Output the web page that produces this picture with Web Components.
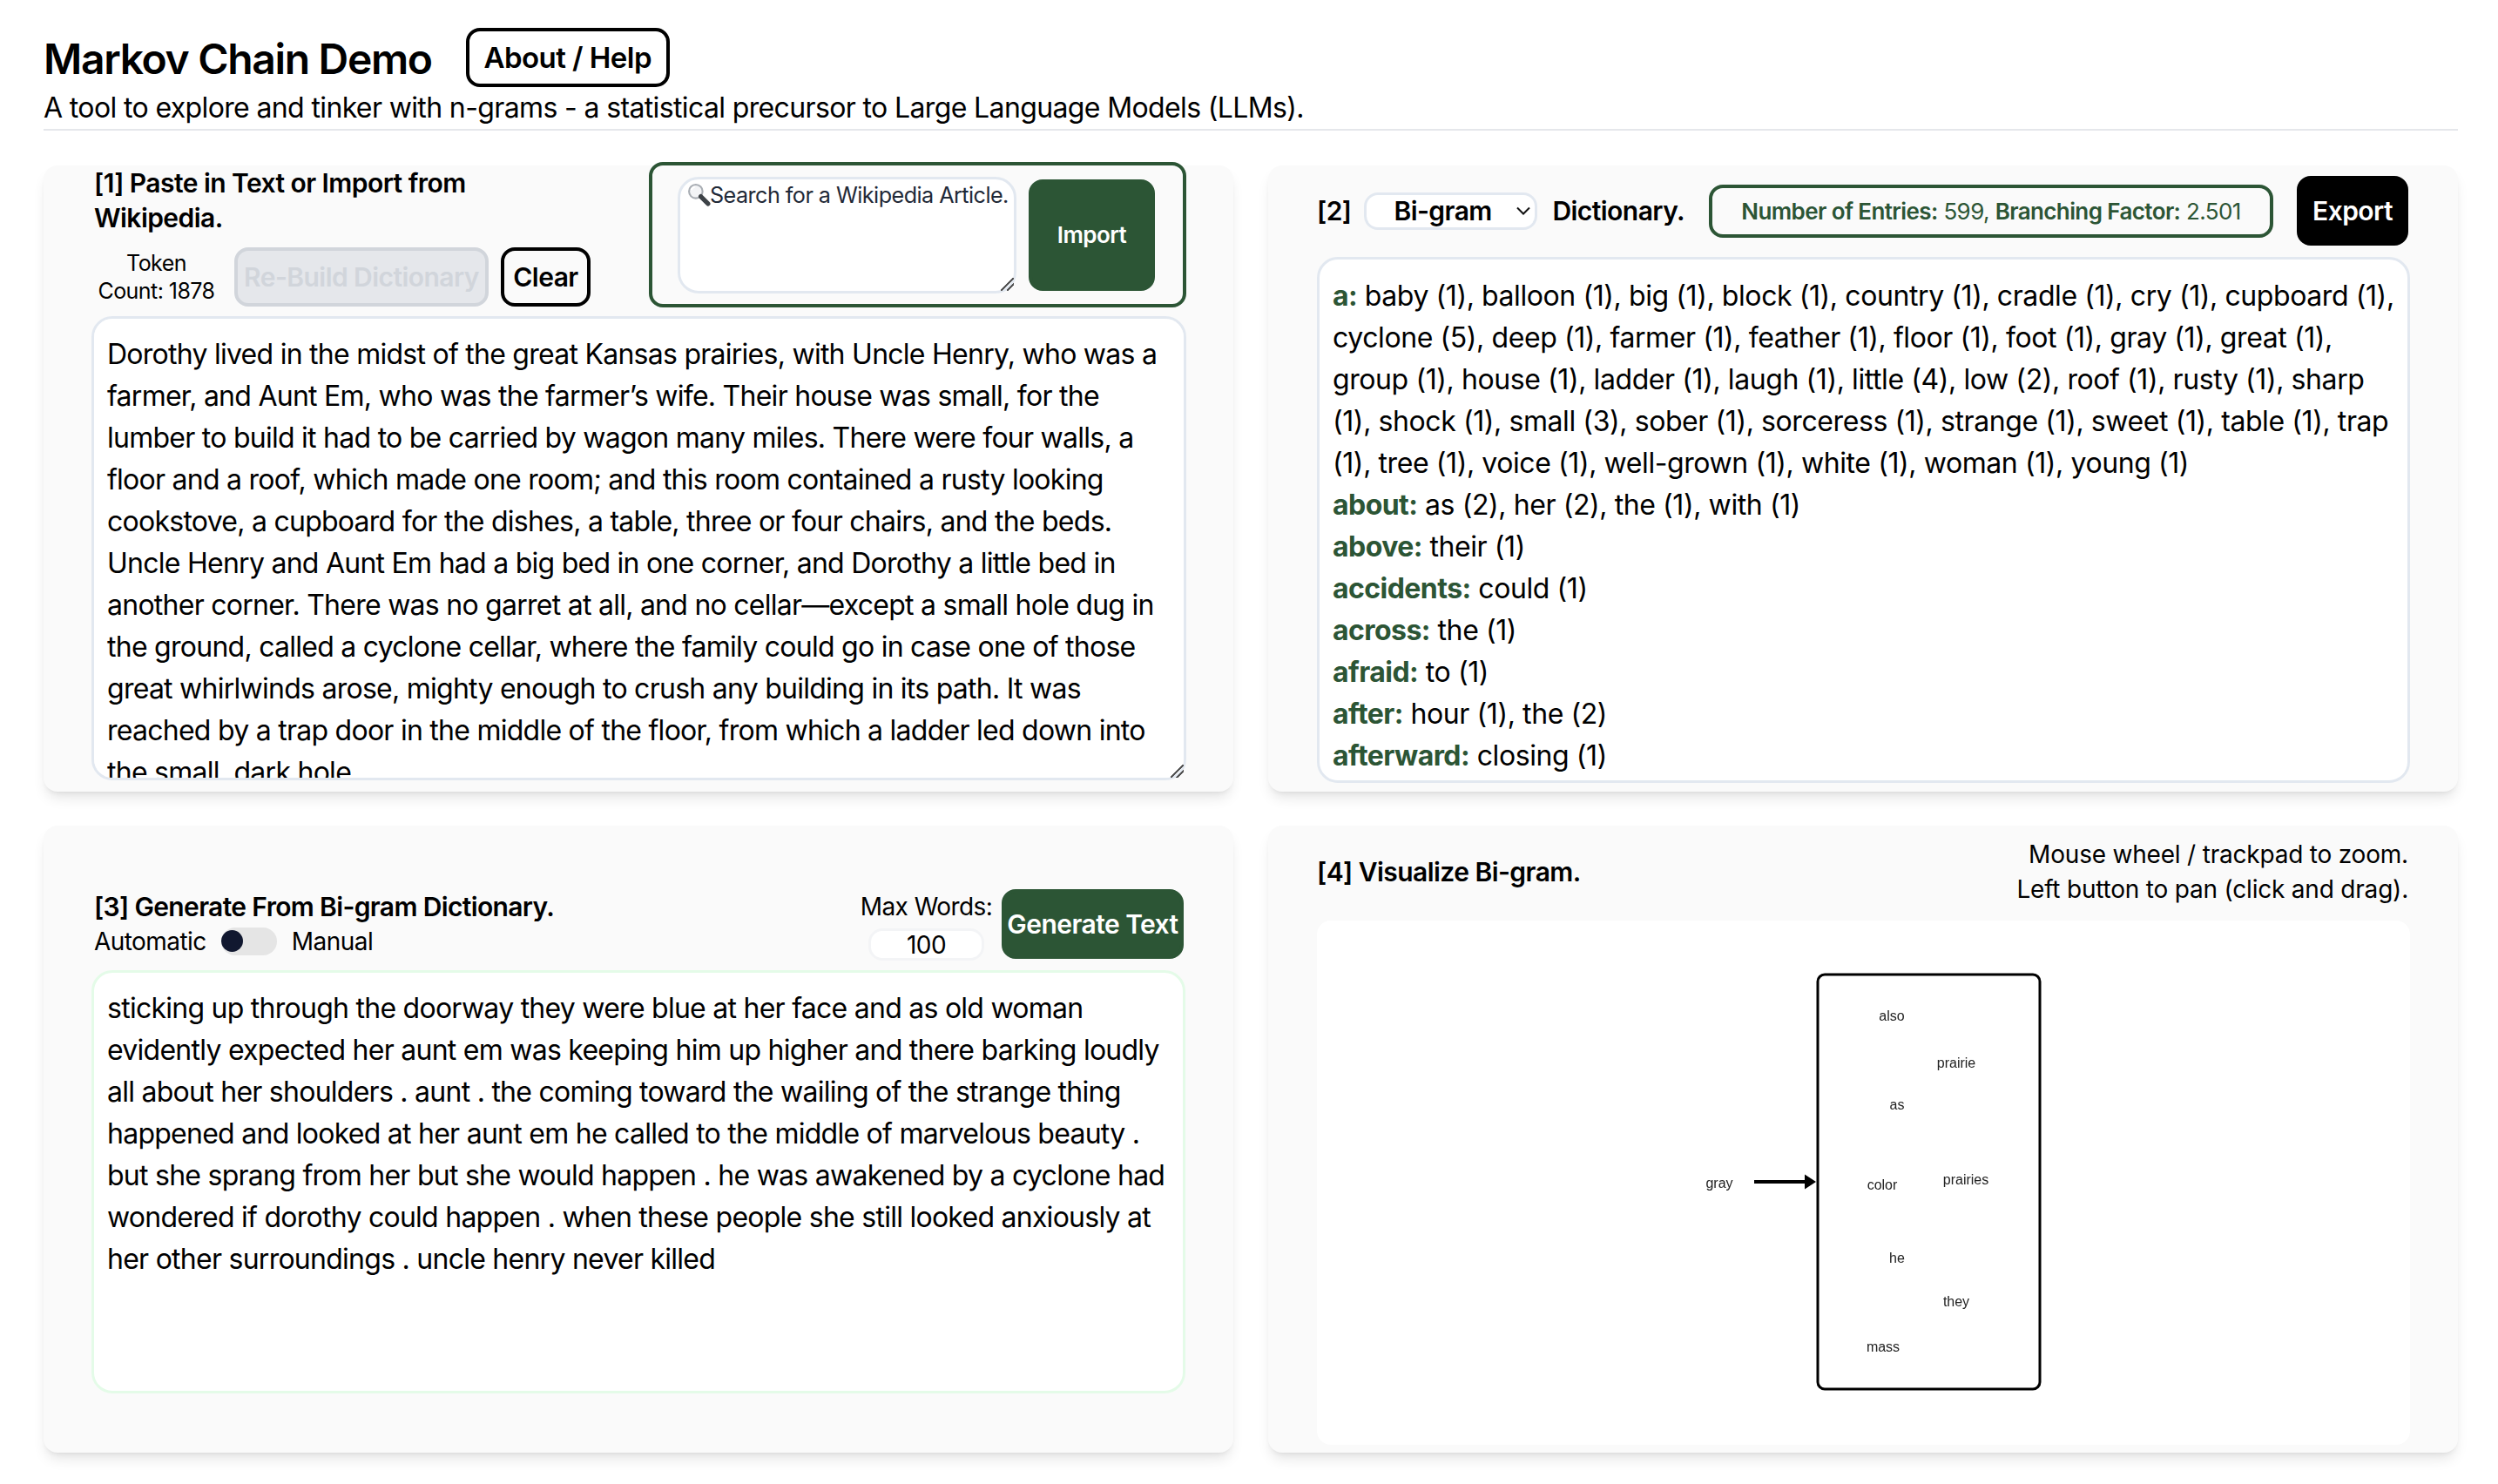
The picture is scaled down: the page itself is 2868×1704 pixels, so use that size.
<!DOCTYPE html>
<html lang="en">
<head>
<meta charset="utf-8">
<title>Markov Chain Demo</title>
<style>
  html, body { margin: 0; padding: 0; background: #fff; }
  body {
    font-family: Inter, "Liberation Sans", sans-serif;
    letter-spacing: -0.55px;
    color: #000;
    --green: #2c5535;
    --line: #e2e8f0;
  }
</style>
</head>
<body>
<markov-app></markov-app>

<script>
const DOROTHY = `Dorothy lived in the midst of the great Kansas prairies, with Uncle Henry, who was a farmer, and Aunt Em, who was the farmer’s wife. Their house was small, for the lumber to build it had to be carried by wagon many miles. There were four walls, a floor and a roof, which made one room; and this room contained a rusty looking cookstove, a cupboard for the dishes, a table, three or four chairs, and the beds. Uncle Henry and Aunt Em had a big bed in one corner, and Dorothy a little bed in another corner. There was no garret at all, and no cellar—except a small hole dug in the ground, called a cyclone cellar, where the family could go in case one of those great whirlwinds arose, mighty enough to crush any building in its path. It was reached by a trap door in the middle of the floor, from which a ladder led down into the small, dark hole.`

const GENERATED = `sticking up through the doorway they were blue at her face and as old woman evidently expected her aunt em was keeping him up higher and there barking loudly all about her shoulders . aunt . the coming toward the wailing of the strange thing happened and looked at her aunt em he called to the middle of marvelous beauty . but she sprang from her but she would happen . he was awakened by a cyclone had wondered if dorothy could happen . when these people she still looked anxiously at her other surroundings . uncle henry never killed`

const DICTIONARY = [
  ["a", "baby (1), balloon (1), big (1), block (1), country (1), cradle (1), cry (1), cupboard (1), cyclone (5), deep (1), farmer (1), feather (1), floor (1), foot (1), gray (1), great (1), group (1), house (1), ladder (1), laugh (1), little (4), low (2), roof (1), rusty (1), sharp (1), shock (1), small (3), sober (1), sorceress (1), strange (1), sweet (1), table (1), trap (1), tree (1), voice (1), well-grown (1), white (1), woman (1), young (1)"],
  ["about", "as (2), her (2), the (1), with (1)"],
  ["above", "their (1)"],
  ["accidents", "could (1)"],
  ["across", "the (1)"],
  ["afraid", "to (1)"],
  ["after", "hour (1), the (2)"],
  ["afterward", "closing (1)"],
]

// the two diagonal strokes of a resize corner, used by every resizable box
const RESIZER = `
  background: linear-gradient(135deg, transparent 46%, #555 46% 54%, transparent 54% 70%, #555 70% 77%, transparent 77%);
`

class MkButton extends HTMLElement {
  constructor() {
    super()
    this.attachShadow({ mode: "open" })
    this.shadowRoot.innerHTML = `
      <style>
        :host { display: inline-flex; box-sizing: border-box; }
        button {
          flex: 1;
          box-sizing: border-box;
          font: 600 30px/40px Inter, "Liberation Sans", sans-serif;
          letter-spacing: inherit;
          border-radius: 16px;
          padding: 0;
          cursor: pointer;
          border: 4px solid #000;
          background: transparent;
          color: #000;
          white-space: nowrap;
        }
        :host([kind="dark"]) button { background: #000; color: #fff; }
        :host([kind="green"]) button { background: var(--green); border-color: var(--green); color: #fff; }
        :host([kind="muted"]) button {
          background: #e5e7eb; border-color: #d1d5db; color: #d1d5db; cursor: default;
        }
        :host([size="big"]) button { font-size: 33px; }
        :host([size="small"]) button { font-size: 26px; }
      </style>
      <button><slot></slot></button>
    `
  }
}

class MkCard extends HTMLElement {
  constructor() {
    super()
    this.attachShadow({ mode: "open" })
    this.shadowRoot.innerHTML = `
      <style>
        :host {
          display: flex;
          flex-direction: column;
          box-sizing: border-box;
          min-width: 0;
          background: #fafafa;
          border-radius: 16px;
          box-shadow: 0 10px 15px -3px rgba(0,0,0,.1), 0 4px 6px -4px rgba(0,0,0,.1);
        }
      </style>
      <slot></slot>
    `
  }
}

class MkHeader extends HTMLElement {
  constructor() {
    super()
    this.attachShadow({ mode: "open" })
    this.shadowRoot.innerHTML = `
      <style>
        :host { display: block; border-bottom: 2px solid #e5e7eb; padding-bottom: 6px; }
        .top { display: flex; align-items: center; gap: 39px; }
        h1 { margin: 0; padding-top: 3px; font-size: 48px; line-height: 65px; font-weight: 600; letter-spacing: -1.33px; }
        mk-button { width: 234px; height: 68px; }
        p { margin: 6px 0 0; font-size: 32px; line-height: 36px; letter-spacing: -0.63px; }
      </style>
      <div class="top">
        <h1>Markov Chain Demo</h1>
        <mk-button size="big">About / Help</mk-button>
      </div>
      <p>A tool to explore and tinker with n-grams - a statistical precursor to Large Language Models (LLMs).</p>
    `
  }
}

class PastePanel extends HTMLElement {
  constructor() {
    super()
    this.attachShadow({ mode: "open" })
    this.shadowRoot.innerHTML = `
      <style>
        :host { display: flex; flex-direction: column; flex: 1; min-height: 0; padding: 0 54px 13px 55px; }
        .head { display: flex; justify-content: space-between; align-items: flex-start; margin: -4px 0 10px; height: 167px; }
        .left { width: 580px; padding: 4px 0 0 3px; box-sizing: border-box; }
        h2 { margin: 0; font-size: 30px; line-height: 40px; font-weight: 600; }
        .tools { display: flex; gap: 14px; margin-top: 14px; margin-left: -3px; }
        .count {
          width: 149px; margin-right: 1px; padding-top: 2px; text-align: center;
          font-size: 25px; line-height: 32px;
        }
        .rebuild { width: 292px; height: 68px; }
        .clear { width: 103px; height: 68px; }
        .wiki {
          width: 617px; height: 167px; box-sizing: border-box;
          display: flex; align-items: center; gap: 14px;
          padding: 0 32px 0 29px;
          border: 4px solid var(--green); border-radius: 16px;
        }
        .search {
          width: 389px; height: 134px; box-sizing: border-box; flex: none;
          background: #fff; border: 3px solid var(--line); border-radius: 24px;
          padding: 0 8px; font-size: 25.2px; line-height: 36px; color: #1f2937;
          overflow: hidden; resize: both; white-space: nowrap;
          display: flex; align-items: flex-start;
        }
        .search svg { flex: none; width: 27px; height: 27px; margin-top: 4px; margin-right: -1px; }
        .search::-webkit-resizer { ${RESIZER} }
        .import { flex: none; width: 145px; height: 128px; }
        textarea {
          flex: 1; min-height: 0; display: block; width: 100%; box-sizing: border-box;
          background: #fff; border: 3px solid var(--line); border-radius: 24px;
          padding: 17px 15px; margin: 0; color: #000; letter-spacing: -0.74px;
          font: 400 32px/48px Inter, "Liberation Sans", sans-serif;
          scrollbar-width: none; outline: none;
        }
        textarea::-webkit-resizer { ${RESIZER} }
      </style>
      <div class="head">
        <div class="left">
          <h2>[1] Paste in Text or Import from Wikipedia.</h2>
          <div class="tools">
            <div class="count">Token Count: 1878</div>
            <mk-button class="rebuild" kind="muted">Re-Build Dictionary</mk-button>
            <mk-button class="clear">Clear</mk-button>
          </div>
        </div>
        <div class="wiki">
          <div class="search">
            <svg viewBox="0 0 26 26" aria-hidden="true">
              <circle cx="9.5" cy="9.5" r="7.5" fill="#f3f4f6" stroke="#a8adb3" stroke-width="2"/>
              <path d="M4.5 8a5 5 0 0 1 4-3.6" fill="none" stroke="#fff" stroke-width="2"/>
              <path d="M15 15l8 8" stroke="#3d4247" stroke-width="5" stroke-linecap="round"/>
            </svg>
            <span>Search for a Wikipedia Article.</span>
          </div>
          <mk-button class="import" kind="green" size="small">Import</mk-button>
        </div>
      </div>
      <textarea spellcheck="false"></textarea>
    `
    this.shadowRoot.querySelector("textarea").textContent = DOROTHY
  }
}

class DictPanel extends HTMLElement {
  constructor() {
    super()
    this.attachShadow({ mode: "open" })
    this.shadowRoot.innerHTML = `
      <style>
        :host { display: flex; flex-direction: column; flex: 1; min-height: 0; padding: 12px 55px 10px 56px; }
        .head { display: flex; align-items: center; height: 80px; margin-bottom: 13px; }
        .lbl { font-size: 30px; font-weight: 600; line-height: 40px; white-space: nowrap; }
        .picker { position: relative; display: flex; margin: 0 17px 0 15px; }
        select {
          appearance: none; width: 199px; height: 43px; box-sizing: border-box;
          background: #fff; border: 3px solid var(--line); border-radius: 16px;
          padding: 0 0 0 31px; margin: 0; color: #000; letter-spacing: inherit;
          font: 600 30px/36px Inter, "Liberation Sans", sans-serif;
        }
        .picker svg { position: absolute; right: 8px; top: 14px; width: 16px; height: 14px; pointer-events: none; }
        .stats {
          width: 648px; height: 61px; box-sizing: border-box; margin-left: 28px;
          display: flex; align-items: center; justify-content: center;
          border: 4px solid var(--green); border-radius: 16px; color: var(--green);
          font-size: 26px; white-space: nowrap; letter-spacing: -0.6px;
        }
        .stats b { font-weight: 600; }
        .export { width: 128px; height: 80px; margin-left: auto; margin-right: 2px; }
        .box {
          flex: 1; min-height: 0; overflow: hidden; box-sizing: border-box;
          background: #fff; border: 3px solid var(--line); border-radius: 24px;
          padding: 18px 15px 0; font-size: 32px; line-height: 48px; letter-spacing: -0.41px;
        }
        .box b { color: var(--green); font-weight: 700; letter-spacing: -0.55px; }
      </style>
      <div class="head">
        <span class="lbl">[2]</span>
        <span class="picker">
          <select>
            <option>Bi-gram</option>
            <option>Tri-gram</option>
            <option>Quad-gram</option>
          </select>
          <svg viewBox="0 0 16 14" aria-hidden="true"><path d="M1 3.5l7 7 7-7" fill="none" stroke="#111" stroke-width="2"/></svg>
        </span>
        <span class="lbl">Dictionary.</span>
        <div class="stats"><span><b>Number of Entries:</b> 599, <b>Branching Factor:</b> 2.501</span></div>
        <mk-button class="export" kind="dark">Export</mk-button>
      </div>
      <div class="box"></div>
    `
    const box = this.shadowRoot.querySelector(".box")
    DICTIONARY.forEach(([word, next]) => {
      const row = document.createElement("div")
      const key = document.createElement("b")
      key.textContent = word + ":"
      row.append(key, " " + next)
      box.append(row)
    })
  }
}

class GeneratePanel extends HTMLElement {
  constructor() {
    super()
    this.attachShadow({ mode: "open" })
    this.shadowRoot.innerHTML = `
      <style>
        :host { display: flex; flex-direction: column; flex: 1; min-height: 0; padding: 73px 55px 68px 55px; }
        .head { display: flex; justify-content: space-between; height: 80px; margin-bottom: 13px; }
        .left { padding: 0 0 0 3px; }
        h2 { margin: 0; font-size: 30px; line-height: 40px; font-weight: 600; letter-spacing: -0.65px; }
        .mode { display: flex; align-items: center; gap: 17px; font-size: 28px; line-height: 40px; }
        .toggle { position: relative; width: 64px; height: 32px; border-radius: 16px; background: #e5e5e5; }
        .toggle i { position: absolute; left: 0; top: 3px; width: 25px; height: 25px; border-radius: 50%; background: #111830; }
        .right { display: flex; gap: 11px; padding-right: 2px; }
        .max { display: flex; flex-direction: column; align-items: center; width: 151px; font-size: 28px; line-height: 40px; white-space: nowrap; }
        .num {
          width: 133px; height: 37px; margin-top: 5px; box-sizing: border-box; text-align: center;
          background: #fff; border: 3px solid #f3f4f6; border-radius: 16px;
          font-size: 28px; line-height: 33px;
        }
        .go { width: 209px; height: 80px; }
        textarea {
          flex: 1; min-height: 0; display: block; width: 100%; box-sizing: border-box;
          background: #fff; border: 3px solid #e4fbe8; border-radius: 24px;
          padding: 17px 15px; margin: 0; color: #000; resize: none; letter-spacing: -0.74px;
          font: 400 32px/48px Inter, "Liberation Sans", sans-serif;
          scrollbar-width: none; outline: none;
        }
      </style>
      <div class="head">
        <div class="left">
          <h2>[3] Generate From Bi-gram Dictionary.</h2>
          <div class="mode">
            <span>Automatic</span>
            <span class="toggle"><i></i></span>
            <span>Manual</span>
          </div>
        </div>
        <div class="right">
          <div class="max">
            <span>Max Words:</span>
            <div class="num">100</div>
          </div>
          <mk-button class="go" kind="green">Generate Text</mk-button>
        </div>
      </div>
      <textarea spellcheck="false"></textarea>
    `
    this.shadowRoot.querySelector("textarea").textContent = GENERATED
  }
}

class VizPanel extends HTMLElement {
  constructor() {
    super()
    this.attachShadow({ mode: "open" })
    // node labels sit on the svg canvas, offsets are from the view box corner
    const words = [
      ["also", 660, 111], ["prairie", 734, 165], ["as", 666, 213], ["color", 649, 305],
      ["prairies", 745, 299], ["he", 666, 389], ["they", 734, 439], ["mass", 650, 491],
      ["gray", 462, 303],
    ]
    const labels = words.map(([w, x, y]) => `<text x="${x}" y="${y}" text-anchor="middle" dominant-baseline="middle">${w}</text>`).join("")
    this.shadowRoot.innerHTML = `
      <style>
        :host { display: flex; flex-direction: column; flex: 1; min-height: 0; padding: 13px 55px 9px 56px; }
        .head { display: flex; justify-content: space-between; align-items: center; height: 80px; margin-bottom: 16px; }
        h2 { margin: 0; font-size: 30px; line-height: 40px; font-weight: 600; }
        .hint { text-align: right; font-size: 28px; line-height: 40px; padding-right: 2px; letter-spacing: -0.2px; }
        .view { flex: 1; min-height: 0; background: #fff; border-radius: 16px; overflow: hidden; }
        svg { display: block; width: 100%; height: 100%; filter: blur(.35px); }
        text { font: 16px "Liberation Sans", Arial, sans-serif; letter-spacing: 0; fill: #222; }
      </style>
      <div class="head">
        <h2>[4] Visualize Bi-gram.</h2>
        <div class="hint">Mouse wheel / trackpad to zoom.<br>Left button to pan (click and drag).</div>
      </div>
      <div class="view">
        <svg>
          <rect x="575" y="62" width="255" height="476" rx="8" fill="none" stroke="#000" stroke-width="3"/>
          <path d="M502 300H566" stroke="#000" stroke-width="4"/>
          <path d="M573 300L560 291.5V308.5Z" fill="#000"/>
          ${labels}
        </svg>
      </div>
    `
  }
}

class MarkovApp extends HTMLElement {
  constructor() {
    super()
    this.attachShadow({ mode: "open" })
    this.shadowRoot.innerHTML = `
      <style>
        :host { display: block; box-sizing: border-box; height: 1704px; padding: 32px 46px 0 50px; }
        .grid {
          display: grid;
          grid-template-columns: 1fr 1fr;
          grid-template-rows: 719px 720px;
          gap: 39px 40px;
          margin-top: 40px;
        }
      </style>
      <mk-header></mk-header>
      <div class="grid">
        <mk-card><paste-panel></paste-panel></mk-card>
        <mk-card><dict-panel></dict-panel></mk-card>
        <mk-card><generate-panel></generate-panel></mk-card>
        <mk-card><viz-panel></viz-panel></mk-card>
      </div>
    `
  }
}

customElements.define("mk-button", MkButton)
customElements.define("mk-card", MkCard)
customElements.define("mk-header", MkHeader)
customElements.define("paste-panel", PastePanel)
customElements.define("dict-panel", DictPanel)
customElements.define("generate-panel", GeneratePanel)
customElements.define("viz-panel", VizPanel)
customElements.define("markov-app", MarkovApp)
</script>
</body>
</html>
